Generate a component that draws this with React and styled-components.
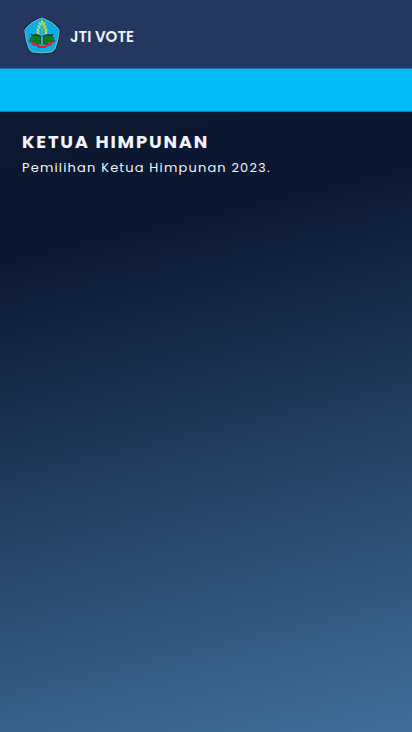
import React from "react";
import styled, { createGlobalStyle } from "styled-components";

const GlobalStyle = createGlobalStyle`
  *, *::before, *::after { box-sizing: border-box; }
  body {
    margin: 0;
    font-family: Poppins, Inter, "Noto Sans", sans-serif;
    color: #f1f4fa;
  }
`;

const Page = styled.div`
  min-height: 100vh;
  background: linear-gradient(167deg, #0d1a32 0%, #0b1730 31%, #406e9a 100%);
`;

const Header = styled.header`
  display: flex;
  align-items: center;
  min-height: 68px;
  padding: 3px 23px 0;
  background: #233760;
`;

const Brand = styled.a`
  display: flex;
  align-items: center;
  gap: 9px;
  color: inherit;
  font-size: 15px;
  line-height: 24px;
  font-weight: 600;
  text-decoration: none;
`;

const Emblem = styled.svg`
  display: block;
  width: 38px;
  height: 38px;
`;

const BrandName = styled.span`
  padding-top: 2px;
`;

const Banner = styled.div`
  height: 44px;
  background: #02bbf7;
  border-top: 1px solid #1d6f9f;
  border-bottom: 1px solid #087fae;
`;

const Main = styled.main`
  padding: 16px 22px;
`;

const Title = styled.h1`
  margin: 0;
  font-size: 18px;
  line-height: 28px;
  font-weight: 700;
  letter-spacing: 0.1em;
`;

const Description = styled.p`
  margin: 0;
  font-size: 13px;
  line-height: 24px;
  font-weight: 400;
  letter-spacing: 0.09em;
`;

const grains = [
  [17, 7], [21, 7], [16, 10], [22, 10], [15, 13], [23, 13], [15, 16], [23, 16],
];

function Logo() {
  return (
    <Emblem viewBox="0 0 38 38" aria-hidden="true">
      <path
        d="M19 0Q20 0 22 1Q30 4 36 10Q38 12 37 16Q36 25 33 33Q32 35 30 36Q19 38 8 36Q6 35 5 33Q2 25 1 16Q0 12 2 10Q8 4 16 1Q18 0 19 0Z"
        fill="#101821"
      />
      <path
        d="M19 1Q20 1 22 2Q30 5 35 11Q37 13 36 16Q35 25 32 32Q31 34 29 35Q19 37 9 35Q7 34 6 32Q3 25 2 16Q1 13 3 11Q8 5 16 2Q18 1 19 1Z"
        fill="#09aee7" stroke="#b8cdd0" strokeWidth=".7"
      />
      <ellipse cx="19" cy="5" rx="1" ry="2" fill="#e8df32" />
      <path d="M19 7V18" stroke="#a9c64a" strokeWidth=".7" />
      {grains.map(([x, y]) => (
        <ellipse
          key={`${x}-${y}`}
          cx={x}
          cy={y}
          rx="1"
          ry="2"
          transform={`rotate(${x < 19 ? -35 : 35} ${x} ${y})`}
          fill="#dfdc35"
        />
      ))}
      <path d="M8 25l2 1 1 2 3 0 2 2 3 0 3 0 2-2 3 0 1-2 2-1" fill="none" stroke="#e51b27" strokeWidth="2" />
      <path d="M18 21Q14 17 10 18Q7 20 6 25Q9 23 11 25Q14 28 18 27Z" fill="#087b23" stroke="#174522" strokeWidth=".5" />
      <path d="M20 21Q24 17 28 18Q31 20 32 25Q29 23 27 25Q24 28 20 27Z" fill="#087b23" stroke="#174522" strokeWidth=".5" />
      <path d="M8 17Q9 19 12 18Q16 17 18 20M30 17Q29 19 26 18Q22 17 20 20" fill="none" stroke="#10231f" strokeWidth="1.2" />
      <path d="M19 20V27" stroke="#b7c7bd" strokeWidth="1.6" />
      <path d="M18 20V27M20 20V27" stroke="#142b1f" strokeWidth=".5" />
    </Emblem>
  );
}

export default function App() {
  return (
    <>
      <GlobalStyle />
      <Page>
        <Header>
          <Brand href="#">
            <Logo />
            <BrandName>JTI VOTE</BrandName>
          </Brand>
        </Header>
        <Banner />
        <Main>
          <Title>KETUA HIMPUNAN</Title>
          <Description>Pemilihan Ketua Himpunan 2023.</Description>
        </Main>
      </Page>
    </>
  );
}
